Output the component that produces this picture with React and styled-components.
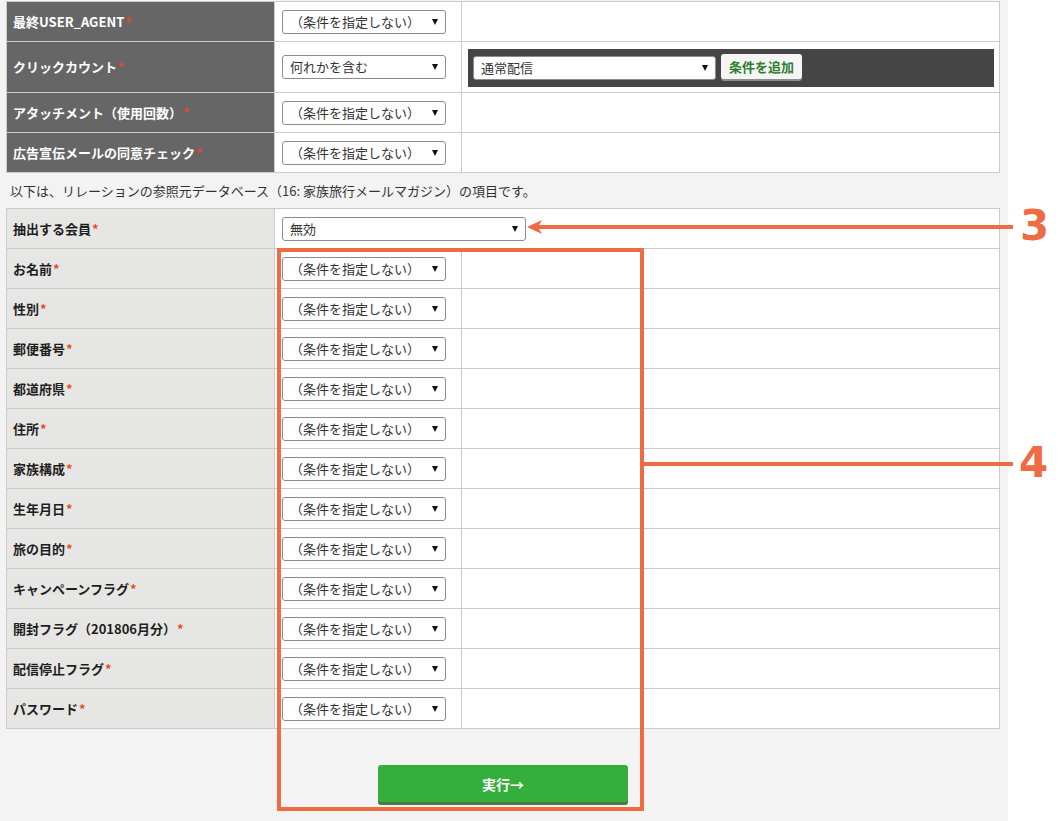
import React from "react";
import styled, { createGlobalStyle } from "styled-components";

const GlobalStyle = createGlobalStyle`
  html, body {
    margin: 0;
    padding: 0;
    background: #fff;
  }
  body {
    font-family: "Noto Sans CJK JP", "Liberation Sans", sans-serif;
    font-size: 13px;
    color: #333;
  }
`;

const ORANGE = "#ee6b43";

const Page = styled.div`
  position: relative;
  display: flex;
  width: 1064px;
  min-height: 821px;
  overflow: hidden;
`;

const Sheet = styled.div`
  width: 1008px;
  box-sizing: border-box;
  padding: 1px 8px 0 6px;
  background: #f3f3f3;
`;

const Table = styled.div`
  border: 1px solid #cbcbcb;
  border-bottom: none;
  background: #fff;
`;

const Row = styled.div`
  display: grid;
  grid-template-columns: 268px 187px 1fr;
  min-height: ${(p) => p.$h || 39}px;
  border-bottom: 1px solid #cbcbcb;
`;

const LabelCell = styled.div`
  display: flex;
  align-items: center;
  padding: 0 6px;
  font-weight: 700;
  font-size: 13px;
  line-height: 18px;
  background: ${(p) => (p.$dark ? "#666666" : "#e6e7e4")};
  color: ${(p) => (p.$dark ? "#fff" : "#1e1e1e")};
  border-right: 1px solid #cbcbcb;
`;

const Req = styled.span`
  color: ${(p) => (p.$dark ? "#e8442a" : "#e2511e")};
  margin-left: 1px;
`;

const FieldCell = styled.div`
  display: flex;
  align-items: center;
  padding: 0 6px 0 7px;
  border-right: ${(p) => (p.$wide ? "none" : "1px solid #cbcbcb")};
  ${(p) => (p.$wide ? "grid-column: 2 / 4;" : "")}
`;

const ExtraCell = styled.div`
  display: flex;
  align-items: center;
  padding: 6px 5px 5px 6px;
`;

const Select = styled.div`
  position: relative;
  box-sizing: border-box;
  width: ${(p) => p.$w || 164}px;
  height: 24px;
  padding: 0 20px 0 7px;
  display: flex;
  align-items: center;
  background: #fff;
  border: 1px solid #8c8c8c;
  border-radius: 3px;
  font-size: 13px;
  line-height: 22px;
  color: #333;
  white-space: nowrap;
  &::after {
    content: "";
    position: absolute;
    right: 7px;
    top: 8px;
    border-left: 3.5px solid transparent;
    border-right: 3.5px solid transparent;
    border-top: 6px solid #111;
  }
`;

const AddPanel = styled.div`
  flex: 1;
  height: 38px;
  box-sizing: border-box;
  padding: 0 5px;
  display: flex;
  align-items: center;
  gap: 5px;
  background: #454545;
`;

const AddButton = styled.div`
  height: 25px;
  margin-top: -2px;
  padding: 0 8px;
  display: flex;
  align-items: center;
  background: #f5f5f5;
  border-radius: 3px;
  box-shadow: 0 2px 0 #8d8d8d;
  color: #2e7d2e;
  font-weight: 700;
  font-size: 13px;
`;

const Note = styled.p`
  margin: 0;
  padding: 9px 4px 8px 4px;
  font-size: 13px;
  line-height: 18px;
  color: #333;
`;

const Footer = styled.div`
  display: flex;
  justify-content: center;
  padding: 36px 0 20px;
`;

const RunButton = styled.div`
  width: 250px;
  height: 37px;
  display: flex;
  align-items: center;
  justify-content: center;
  background: #34ae3c;
  border-radius: 3px;
  box-shadow: 0 3px 0 #4b7945;
  color: #fff;
  font-weight: 700;
  font-size: 14px;
`;

const Overlay = styled.svg`
  position: absolute;
  left: 0;
  top: 0;
  pointer-events: none;
`;

const Callout = styled.span`
  position: absolute;
  left: ${(p) => p.$x}px;
  top: ${(p) => p.$y}px;
  font-family: "DejaVu Sans", "Open Sans", sans-serif;
  font-weight: 700;
  font-size: 42px;
  line-height: 42px;
  color: ${ORANGE};
`;

const NONE = "（条件を指定しない）";

const upperRows = [
  { label: "最終USER_AGENT" },
  { label: "クリックカウント", value: "何れかを含む", extra: true },
  { label: "アタッチメント（使用回数）" },
  { label: "広告宣伝メールの同意チェック" },
];

const memberRows = [
  "お名前",
  "性別",
  "郵便番号",
  "都道府県",
  "住所",
  "家族構成",
  "生年月日",
  "旅の目的",
  "キャンペーンフラグ",
  "開封フラグ（201806月分）",
  "配信停止フラグ",
  "パスワード",
];

export default function App() {
  return (
    <>
      <GlobalStyle />
      <Page>
        <Sheet>
          <Table>
            {upperRows.map((r) => (
              <Row key={r.label} $h={r.extra ? 50 : 39}>
                <LabelCell $dark>
                  {r.label}
                  <Req $dark>*</Req>
                </LabelCell>
                <FieldCell>
                  <Select>{r.value || NONE}</Select>
                </FieldCell>
                {r.extra ? (
                  <ExtraCell>
                    <AddPanel>
                      <Select $w={243}>通常配信</Select>
                      <AddButton>条件を追加</AddButton>
                    </AddPanel>
                  </ExtraCell>
                ) : (
                  <div />
                )}
              </Row>
            ))}
          </Table>

          <Note>
            以下は、リレーションの参照元データベース（16: 家族旅行メールマガジン）の項目です。
          </Note>

          <Table>
            <Row>
              <LabelCell>
                抽出する会員<Req>*</Req>
              </LabelCell>
              <FieldCell $wide>
                <Select $w={244}>無効</Select>
              </FieldCell>
            </Row>
            {memberRows.map((label) => (
              <Row key={label}>
                <LabelCell>
                  {label}
                  <Req>*</Req>
                </LabelCell>
                <FieldCell>
                  <Select>{NONE}</Select>
                </FieldCell>
                <div />
              </Row>
            ))}
          </Table>

          <Footer>
            <RunButton>実行→</RunButton>
          </Footer>
        </Sheet>

        <Overlay width="1064" height="821" viewBox="0 0 1064 821">
          <rect x="279" y="250" width="363" height="559" fill="none" stroke={ORANGE} strokeWidth="4" />
          <line x1="642" y1="464" x2="1013" y2="464" stroke={ORANGE} strokeWidth="4" />
          <line x1="536" y1="227" x2="1013" y2="227" stroke={ORANGE} strokeWidth="4" />
          <polygon points="527,227 542,220 538,227 542,234" fill={ORANGE} />
        </Overlay>
        <Callout $x={1020} $y={205}>3</Callout>
        <Callout $x={1019} $y={442}>4</Callout>
      </Page>
    </>
  );
}
